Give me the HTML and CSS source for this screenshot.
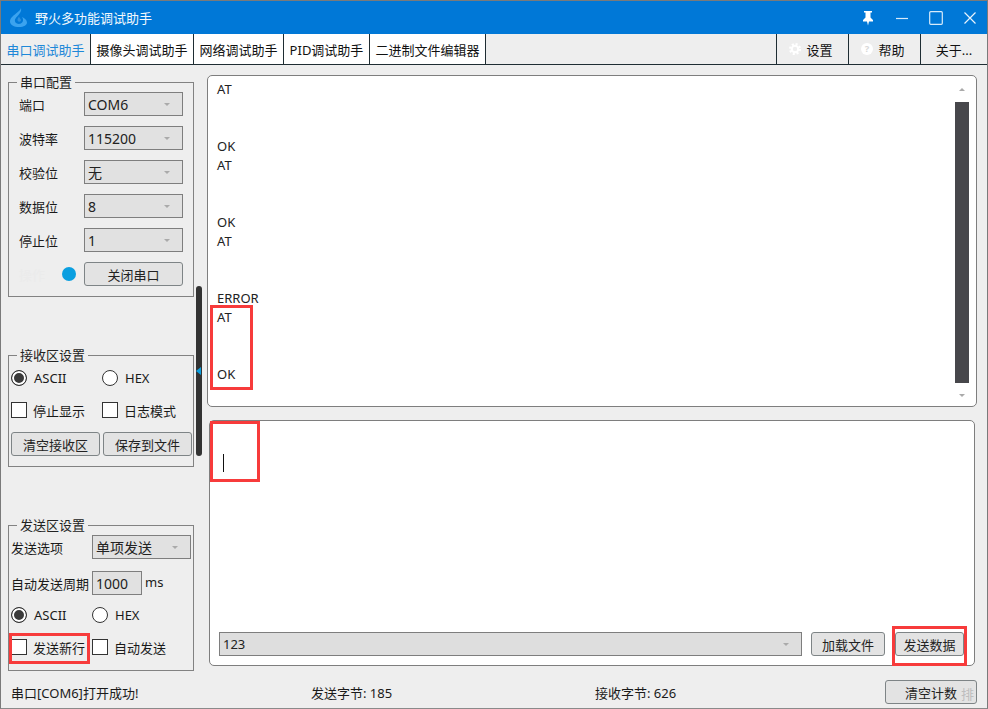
FILE: index.html
```html
<!DOCTYPE html>
<html lang="zh-CN">
<head>
<meta charset="utf-8">
<title>野火多功能调试助手</title>
<link rel="stylesheet" href="styles.css">
</head>
<body>
<div class="window">
  <header class="titlebar">
    <svg class="logo" width="18" height="19" viewBox="0 0 18 19"><path d="M11 0c.8 3-1 5-3 7.500C5.500 10 4 12 5.500 14.500 7 16.500 11 16.500 12.500 14c1-1.800.6-3.500-.5-5 2.500 1 5 3 5 5.500C17 17 14 19 9 19 4 19 0 17 0 13.500 0 10 3 8 6 5.500 8.500 3.500 10.500 2 11 0z" fill="#3ba3ef"/><path d="M9 8.500c-1 1.500-2 3-1.200 4.500.6 1 2.400 1 3 0 .6-1.200-.4-2.200-1-3-.4-.5-.7-1-.8-1.500z" fill="#2b8fe0"/></svg>
    <span class="app-title">野火多功能调试助手</span>
    <div class="win-btns">
      <svg width="14" height="16" viewBox="0 0 14 16"><path d="M3 1h8v1.500H9.500v5L12 10v1.500H8L7 15.500 6 11.500H2V10l2.500-2.500v-5H3z" fill="#fff"/></svg>
      <svg width="14" height="14" viewBox="0 0 14 14"><path d="M1 7.500h12" stroke="#d8ebfa" stroke-width="1.200"/></svg>
      <svg width="14" height="14" viewBox="0 0 14 14"><rect x=".7" y=".7" width="12.600" height="12.600" rx="1" fill="none" stroke="#d8ebfa" stroke-width="1.200"/></svg>
      <svg width="14" height="14" viewBox="0 0 14 14"><path d="M1.500 1.500l11 11M12.500 1.500l-11 11" stroke="#e8f3fc" stroke-width="1.200"/></svg>
    </div>
  </header>
  <nav class="tabs">
    <div class="tab tab-active">串口调试助手</div>
    <div class="tab tab-w1">摄像头调试助手</div>
    <div class="tab tab-w2">网络调试助手</div>
    <div class="tab tab-w3">PID调试助手</div>
    <div class="tab tab-w4">二进制文件编辑器</div>
    <div class="tab-spacer"></div>
    <div class="tab tab-tool tab-left"><svg width="12" height="12" viewBox="0 0 14 14"><circle cx="7" cy="7" r="3.800" fill="none" stroke="#fff" stroke-width="2.500"/><circle cx="7" cy="7" r="5.800" fill="none" stroke="#fff" stroke-width="2.400" stroke-dasharray="2.400 2.160"/></svg>设置</div>
    <div class="tab tab-tool tab-left"><svg width="12" height="12" viewBox="0 0 14 14"><circle cx="7" cy="7" r="7" fill="#fff"/><text x="7" y="11" class="q">?</text></svg>帮助</div>
    <div class="tab tab-tool tab-about">关于...</div>
  </nav>
  <div class="content">
    <aside class="sidebar">
      <fieldset class="group group-serial">
        <legend>串口配置</legend>
        <div class="row"><label>端口</label><div class="combo">COM6<i class="arrow"></i></div></div>
        <div class="row"><label>波特率</label><div class="combo">115200<i class="arrow"></i></div></div>
        <div class="row"><label>校验位</label><div class="combo">无<i class="arrow"></i></div></div>
        <div class="row"><label>数据位</label><div class="combo">8<i class="arrow"></i></div></div>
        <div class="row"><label>停止位</label><div class="combo">1<i class="arrow"></i></div></div>
        <div class="row row-open"><label class="ghost">操作</label><span class="led"></span><button class="btn btn-open">关闭串口</button></div>
      </fieldset>
      <fieldset class="group group-recv">
        <legend>接收区设置</legend>
        <div class="opts">
          <span class="opt opt-a"><i class="radio on"></i>ASCII</span>
          <span class="opt"><i class="radio"></i>HEX</span>
        </div>
        <div class="opts opts-check">
          <span class="opt opt-a"><i class="check"></i>停止显示</span>
          <span class="opt"><i class="check"></i>日志模式</span>
        </div>
        <div class="btn-row">
          <button class="btn">清空接收区</button>
          <button class="btn">保存到文件</button>
        </div>
      </fieldset>
      <fieldset class="group group-send">
        <legend>发送区设置</legend>
        <div class="send-row"><label>发送选项</label><div class="combo combo-send">单项发送<i class="arrow"></i></div></div>
        <div class="send-row send-period"><label>自动发送周期</label><div class="combo combo-num">1000</div><span class="unit">ms</span></div>
        <div class="opts opts-send">
          <span class="opt opt-b"><i class="radio on"></i>ASCII</span>
          <span class="opt"><i class="radio"></i>HEX</span>
        </div>
        <div class="opts opts-send2">
          <span class="opt opt-c"><i class="check"></i>发送新行</span>
          <span class="opt"><i class="check"></i>自动发送</span>
        </div>
      </fieldset>
    </aside>
    <div class="splitter"><i class="splitter-arrow"></i></div>
    <main class="main">
      <section class="recv">
        <pre class="recv-text">AT


OK
AT


OK
AT


ERROR
AT


OK</pre>
        <div class="scroll"><i class="sc-up"></i><div class="thumb"></div><i class="sc-down"></i></div>
      </section>
      <section class="send">
        <div class="caret-area"><span class="caret"></span></div>
        <div class="send-bar">
          <div class="combo combo-data">123<i class="arrow"></i></div>
          <button class="btn btn-load">加载文件</button>
          <button class="btn btn-send">发送数据</button>
        </div>
      </section>
    </main>
  </div>
  <footer class="status">
    <span class="st-msg">串口[COM6]打开成功!</span>
    <span class="st-tx">发送字节: 185</span>
    <span class="st-rx">接收字节: 626</span>
    <button class="btn btn-clear"><span class="ghost-text">排</span><span class="clear-label">清空计数</span></button>
  </footer>
  <div class="mark mark-1"></div>
  <div class="mark mark-2"></div>
  <div class="mark mark-3"></div>
  <div class="mark mark-4"></div>
</div>
</body>
</html>
```
FILE: styles.css
```css
* { box-sizing: border-box; }
html, body { margin: 0; padding: 0; }
body {
  width: 988px; height: 709px; overflow: hidden;
  font-family: "Noto Sans", "Noto Sans CJK SC", sans-serif;
  font-size: 13px; color: #1a1a1a;
}
.window {
  position: relative; width: 988px; height: 709px;
  display: flex; flex-direction: column;
  background: #eeeeee;
  border: 1px solid #7a7a7a; border-bottom-color: #8a8a8a;
}
.titlebar {
  height: 33px; flex: none; background: #0078d7; color: #fff;
  display: flex; align-items: center; padding-left: 9px;
}
.logo { margin-right: 7px; }
.app-title { font-size: 13px; color: #f2f8fd; }
.win-btns { margin-left: auto; display: flex; align-items: center; gap: 20px; padding-right: 10px; }
.q { font: bold 11px "Noto Sans", sans-serif; fill: #d8d8d8; text-anchor: middle; }

.tabs { height: 31px; flex: none; display: flex; border-bottom: 1px solid #1f2d33; background: #eeeeee; }
.tab {
  display: flex; align-items: center; justify-content: center;
  height: 30px; border-right: 1px solid #1f2d33; background: #fff; color: #111;
}
.tab-active { width: 90px; background: #eeeeee; color: #1e88d8; }
.tab-w1 { width: 103px; }
.tab-w2 { width: 90px; }
.tab-w3 { width: 86px; }
.tab-w4 { width: 116px; }
.tab-spacer { flex: 1; }
.tab-tool { width: 72px; background: #eeeeee; border-right: none; gap: 5px; padding-right: 3px; }
.tab-left { border-left: 1px solid #1f2d33; }
.tab-about { width: 67px; border-left: 1px solid #1f2d33; padding-right: 0; }

.content { flex: 1; min-height: 0; display: flex; }
.sidebar { width: 195px; flex: none; padding: 10px 0 0 7px; }
.group {
  width: 186px; margin: 0; padding: 0 0 0 10px; min-width: 0;
  border: 1px solid #828282; position: relative;
}
.group legend { padding: 0 3px; margin-left: 6px; line-height: 14px; font-size: 13px; color: #222; }
.group-serial legend { margin-left: -2px; }
.group-serial { height: 222px; padding-top: 3px; }
.group-recv { height: 119px; margin-top: 51px; padding: 4px 0 0 2px; }
.group-send { height: 153px; margin-top: 51px; padding: 3px 0 0 2px; }

.row { display: flex; align-items: center; height: 24px; margin-bottom: 10px; }
.row label { width: 65px; }
.row-open { position: relative; }
.row-open label { width: 34px; }
.ghost { color: #ebebeb; }
.led { width: 14px; height: 14px; border-radius: 50%; background: #0a9fe0; margin-right: 8px; margin-left: 9px; flex: none; }

.combo {
  width: 99px; height: 24px; background: #e1e1e1; border: 1px solid #7e7e7e;
  display: flex; align-items: center; padding-left: 3px; position: relative; color: #222;
  font-size: 14px; flex: none;
}
.arrow {
  position: absolute; right: 12px; top: 10px; width: 0; height: 0;
  border-left: 3px solid transparent; border-right: 3px solid transparent; border-top: 3px solid #aaa;
}
.btn {
  font: inherit; color: #222; background: #e3e3e3; border: 1px solid #7e8486; border-radius: 3px;
  height: 24px; padding: 0; display: flex; align-items: center; justify-content: center;
}
.btn-open { width: 99px; flex: none; }

.opts { display: flex; height: 24px; align-items: center; }
.opts-check { margin-top: 8px; }
.opt { display: flex; align-items: center; gap: 6px; }
.opt-a { width: 91px; }
.opt-b { width: 81px; }
.opt-c { width: 81px; }
.radio {
  width: 16px; height: 16px; border-radius: 50%; border: 1px solid #333; background: #fff;
  display: block; position: relative; flex: none; margin-right: 1px;
}
.radio.on { box-shadow: inset 0 0 0 2px #fff; background: #3a3a3a; }
.check { width: 16px; height: 16px; border: 1px solid #333; background: #fff; display: block; flex: none; }
.btn-row { display: flex; gap: 3px; margin-top: 10px; }
.btn-row .btn { width: 89px; }

.send-row { display: flex; align-items: center; }
.send-row label { white-space: nowrap; }
.combo-send { width: 99px; margin-left: 29px; }
.send-period { margin-top: 12px; }
.combo-num { width: 50px; margin-left: 3px; background: #e1e1e1; }
.unit { margin-left: 3px; margin-top: -2px; }
.opts-send { margin-top: 8px; }
.opts-send2 { margin-top: 8px; }

.splitter { width: 6px; flex: none; margin: 221px 0 0 0; height: 170px; background: #333; border-radius: 3px; position: relative; }
.splitter-arrow {
  position: absolute; left: 0; top: 81px; width: 0; height: 0;
  border-top: 4px solid transparent; border-bottom: 4px solid transparent; border-right: 5px solid #0a9fe0;
}

.main { flex: 1; min-width: 0; padding: 10px 11px 0 5px; display: flex; flex-direction: column; }
.recv {
  width: 770px; height: 332px; background: #fff; border: 1px solid #7e7e7e; border-radius: 5px;
  position: relative; display: flex;
}
.recv-text { margin: 4px 0 0 9px; font: 13px/19px "Noto Sans", "Noto Sans CJK SC", sans-serif; color: #222; flex: 1; }
.scroll { width: 14px; margin-right: 7px; display: flex; flex-direction: column; align-items: center; padding-top: 12px; }
.thumb { width: 14px; height: 281px; background: #47474b; margin-top: 11px; flex: none; }
.sc-up, .sc-down { width: 0; height: 0; border-left: 3px solid transparent; border-right: 3px solid transparent; }
.sc-up { border-bottom: 3px solid #aaa; }
.sc-down { border-top: 3px solid #aaa; margin-top: 11px; }

.send {
  width: 766px; height: 246px; margin: 13px 0 0 2px; background: #fff;
  border: 1px solid #7e7e7e; border-radius: 5px; display: flex; flex-direction: column;
}
.caret-area { flex: 1; padding: 33px 0 0 13px; }
.caret { display: block; width: 1px; height: 18px; background: #111; }
.send-bar { display: flex; padding: 0 0 9px 9px; align-items: center; }
.combo-data { width: 583px; height: 24px; background: #dedede; font-size: 13px; }
.btn-load { width: 74px; margin-left: 9px; }
.btn-send { width: 69px; margin-left: 10px; }

.status { height: 29px; flex: none; position: relative; display: flex; align-items: center; }
.st-msg { position: absolute; left: 10px; top: 4px; }
.st-tx { position: absolute; left: 310px; top: 4px; }
.st-rx { position: absolute; left: 594px; top: 4px; }
.btn-clear {
  position: absolute; left: 884px; top: 1px; width: 92px; height: 24px;
  justify-content: flex-start; padding-left: 19px; white-space: nowrap;
}
.clear-label { position: relative; }
.ghost-text { position: absolute; right: 2px; top: 3px; color: #bdbdbd; }

.mark { position: absolute; border: 3px solid #f73b3b; pointer-events: none; }
.mark-1 { left: 209px; top: 304px; width: 43px; height: 85px; }
.mark-2 { left: 209px; top: 420px; width: 50px; height: 61px; }
.mark-3 { left: 8px; top: 632px; width: 81px; height: 31px; }
.mark-4 { left: 891px; top: 625px; width: 75px; height: 40px; }
```
